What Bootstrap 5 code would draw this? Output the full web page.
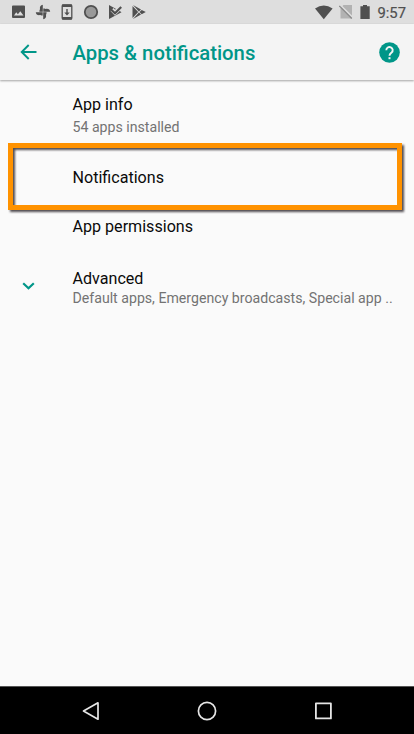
<!DOCTYPE html>
<html lang="en">
<head>
<meta charset="utf-8">
<meta name="viewport" content="width=device-width, initial-scale=1">
<title>Apps &amp; notifications</title>
<link href="https://cdn.jsdelivr.net/npm/bootstrap@5.3.0/dist/css/bootstrap.min.css" rel="stylesheet">
<style>
body{font-family:Roboto,sans-serif;background:#fafafa;color:#0a0a0a;height:734px;overflow:hidden}
svg{display:block;flex:none}
.statusbar{height:24px;background:#dedede;color:#505050;padding:0 8px 0 11px;font-size:14.8px;line-height:24px}
.statusbar .icons-left{gap:8px}
.statusbar .clock{margin-left:7px;-webkit-text-stroke:.2px #505050;padding-top:1px}
.statusbar .sim{margin-left:6px}
.statusbar .battery{margin-left:7px}
.appbar{height:56px;background:#f4f4f4;color:#009688;padding:0 14px 0 19px;box-shadow:0 1px 2px rgba(0,0,0,.35);z-index:1}
.appbar h1{font-size:20.3px;font-weight:500;line-height:24px;margin:2px 0 0 33.500px}
.setting{padding:0 20px 0 72.500px}
.setting .label{font-size:16.1px;line-height:20px;white-space:nowrap}
.setting .detail{font-size:14.150px;line-height:18px;color:#737373;white-space:nowrap}
.row-info{height:72px;padding-top:15px}
.row-info .detail{margin-top:3px}
.row-single{height:49px}
.row-single .label{padding-top:2px}
.row-advanced{height:76px;padding-left:20px}
.row-advanced .texts{margin-left:35.500px}
.row-advanced svg{margin-top:-5px}
.highlight{left:8px;top:-9px;width:394px;height:67px;border:5px solid #ff9200;filter:drop-shadow(2px 2px 1px rgba(50,45,50,.85));pointer-events:none}
.navkeys{height:48px;background:#000;border-top:1px solid #555;padding:0 81px}
</style>
<script src="https://cdn.jsdelivr.net/npm/bootstrap@5.3.0/dist/js/bootstrap.bundle.min.js"></script>
</head>
<body class="d-flex flex-column m-0">
<div class="statusbar d-flex align-items-center justify-content-between">
  <div class="icons-left d-flex align-items-center">
    <svg width="16" height="16" viewBox="0 0 16 16"><path fill="currentColor" fill-rule="evenodd" d="M2 1.500h11a1 1 0 0 1 1 1v10.500a1 1 0 0 1-1 1H2a1 1 0 0 1-1-1V2.500a1 1 0 0 1 1-1zM3 11.500h9.500L9.300 7.200 6.900 10.200 5.200 8.300z"/></svg>
    <svg width="16" height="16" viewBox="0 0 16 16" fill="currentColor"><path d="M7.800.8v6.900H4.400C4.400 6 5 5.200 5 5.200 4.500 2.800 5.500 1 7.800.8z"/><path d="M15.200 7.800H8.300V4.400C10 4.400 10.800 5 10.800 5 13.200 4.500 15 5.500 15.200 7.800z"/><path d="M8.200 15.200V8.300h3.400c0 1.700-.6 2.500-.6 2.500.5 2.400-.5 4.200-2.800 4.400z"/><path d="M.8 8.200h6.900v3.400C6 11.600 5.200 11 5.200 11 2.800 11.500 1 10.500.8 8.200z"/></svg>
    <svg width="16" height="16" viewBox="0 0 16 16"><rect x="3.200" y="1" width="9.600" height="14" rx="1" fill="none" stroke="currentColor" stroke-width="1.300"/><path fill="currentColor" d="M3 .5h10V3H3zM3 13h10v2.500H3zM7.300 5h1.400v3.500h2L8 11.500 5.300 8.500h2z"/></svg>
    <svg width="16" height="16" viewBox="0 0 16 16"><circle cx="8" cy="8" r="6.200" fill="#999" stroke="currentColor" stroke-width="1.800"/></svg>
    <svg width="16" height="16" viewBox="0 0 16 16"><path fill="currentColor" d="M2 1 13.500 7.600 14.500 8.300 2 15z"/><path d="M5 5.500 8 8.700 14.500 2.200" fill="none" stroke="#dedede" stroke-width="4.200"/><path d="M4 5.500 8 9.300 14.200 3" fill="none" stroke="currentColor" stroke-width="2.200"/></svg>
    <svg width="16" height="16" viewBox="0 0 16 16"><path fill="currentColor" d="M2 1 10 5.500 7.900 7.500zM1.500 2 7.200 8 1.500 14zM2 15 7.900 8.600 10 10.500zM10.700 5.900 14.800 8 10.700 10.200 8.500 8z"/></svg>
  </div>
  <div class="d-flex align-items-center">
    <svg width="18" height="16" viewBox="0 0 18 16"><path fill="currentColor" d="M0 4.600Q8.800-1.800 17.600 4.600L8.800 15.200z"/></svg>
    <svg class="sim" width="14" height="16" viewBox="0 0 14 16"><path fill="#b2b2b2" d="M4.500 1H13v13.500H1.500V4z"/><path d="M1.300 1 14 13.700" stroke="#dedede" stroke-width="1.600"/><path d="M.3 2 12.800 14.500" stroke="#8c8c8c" stroke-width="1.300"/></svg>
    <svg class="battery" width="10" height="16" viewBox="0 0 10 16"><path fill="currentColor" d="M3 1h4v1.300h2.700v12.700H.4V2.300H3z"/></svg>
    <span class="clock">9:57</span>
  </div>
</div>
<header class="appbar d-flex align-items-center position-relative">
  <svg width="20" height="20" viewBox="0 0 20 20"><path d="M17.500 10H3M9.700 3 2.700 10l7 7" fill="none" stroke="currentColor" stroke-width="1.900"/></svg>
  <h1>Apps &amp; notifications</h1>
  <svg class="ms-auto" width="21" height="21" viewBox="0 0 21 21"><circle cx="10.500" cy="10.500" r="10.300" fill="currentColor"/><path d="M7.300 8.200a3.200 3.200 0 1 1 5.300 2.400c-1.200 1-2.100 1.600-2.100 3.200" fill="none" stroke="#f4f4f4" stroke-width="1.900"/><rect x="9.500" y="15.200" width="2" height="2" fill="#f4f4f4"/></svg>
</header>
<main class="flex-grow-1">
  <div class="setting row-info">
    <div class="label">App info</div>
    <div class="detail">54 apps installed</div>
  </div>
  <div class="setting row-single d-flex align-items-center position-relative">
    <div class="label">Notifications</div>
    <div class="highlight position-absolute"></div>
  </div>
  <div class="setting row-single d-flex align-items-center">
    <div class="label">App permissions</div>
  </div>
  <div class="setting row-advanced d-flex align-items-center">
    <svg width="17" height="16" viewBox="0 0 17 16"><path d="M3.200 5.200 8.500 10.200l5.300-5" fill="none" stroke="#009688" stroke-width="2.200"/></svg>
    <div class="texts">
      <div class="label">Advanced</div>
      <div class="detail">Default apps, Emergency broadcasts, Special app ..</div>
    </div>
  </div>
</main>
<nav class="navkeys d-flex align-items-center justify-content-between">
  <svg width="20" height="20" viewBox="0 0 20 20"><path d="M17 1.800v16.400L2.500 10z" fill="none" stroke="#e6e6e6" stroke-width="1.700" stroke-linejoin="round"/></svg>
  <svg width="20" height="20" viewBox="0 0 20 20"><circle cx="10" cy="10" r="8.600" fill="none" stroke="#e6e6e6" stroke-width="1.700"/></svg>
  <svg width="20" height="20" viewBox="0 0 20 20"><rect x="2.900" y="2.400" width="15" height="15" fill="none" stroke="#e6e6e6" stroke-width="1.800" stroke-linejoin="round"/></svg>
</nav>
</body>
</html>
